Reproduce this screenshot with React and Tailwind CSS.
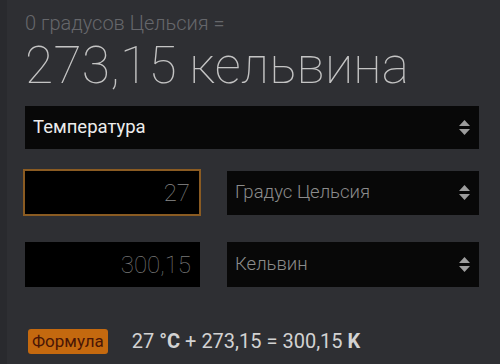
import { useState } from 'react'

const Arrows = () => (
  <svg width="13" height="17" viewBox="0 0 13 17" className="shrink-0">
    <path d="M6.5 1 L12 7 H1 Z" fill="#9d9d9d" />
    <path d="M6.5 16 L12 10 H1 Z" fill="#9d9d9d" />
  </svg>
)

const Select = ({ label, className = '', textClass = '' }) => (
  <div className={`flex items-center justify-between bg-[#080808] pl-2 pr-[8px] ${className}`}>
    <span className={textClass}>{label}</span>
    <Arrows />
  </div>
)

export default function App() {
  const [value] = useState('27')

  return (
    <div
      className="w-[500px] h-[364px] overflow-hidden bg-[#2e2f33] border-l-[7px] border-[#292a2e] pl-[18px] pr-[21px] pt-[11px]"
      style={{ fontFamily: 'Roboto, "Noto Sans", sans-serif' }}
    >
      <div className="text-[20px] font-light leading-[24px] text-[#66676b]">0 градусов Цельсия =</div>
      <div className="text-[51.5px] font-thin leading-[62px] text-[#c4c4c4] tracking-[0.2px]">273,15 кельвина</div>

      <Select
        label="Температура"
        className="mt-[9px] h-[43px]"
        textClass="text-[18.5px] text-[#ececec]"
      />

      <div className="mt-[20px] flex gap-[26px] items-center">
        <div className="w-[178px] h-[47px] -ml-[2px] border-2 border-[#8a5b22] bg-black flex items-center justify-end pr-[9px] text-[24px] font-thin text-[#8a8a8a]">
          {value}
        </div>
        <Select
          label="Градус Цельсия"
          className="flex-1 h-[44px]"
          textClass="text-[18.5px] font-light text-[#8c8c8c]"
        />
      </div>

      <div className="mt-[26px] flex gap-[27px] items-center">
        <div className="w-[175px] h-[45px] bg-black flex items-center justify-end pr-[9px] text-[24px] font-thin text-[#7a7a7a]">
          300,15
        </div>
        <Select
          label="Кельвин"
          className="flex-1 h-[45px]"
          textClass="text-[18.5px] font-light text-[#8c8c8c]"
        />
      </div>

      <div className="mt-[39px] flex items-center gap-[24px] pl-[3px]">
        <span className="rounded-[3px] bg-[#c4690f] px-[4px] h-[25px] leading-[25px] text-[17px] text-[#4a1606]">
          Формула
        </span>
        <span className="text-[20px] text-[#d2d2d2]">
          27 <b className="font-bold">°C</b> + 273,15 = 300,15 <b className="font-bold">K</b>
        </span>
      </div>
    </div>
  )
}
